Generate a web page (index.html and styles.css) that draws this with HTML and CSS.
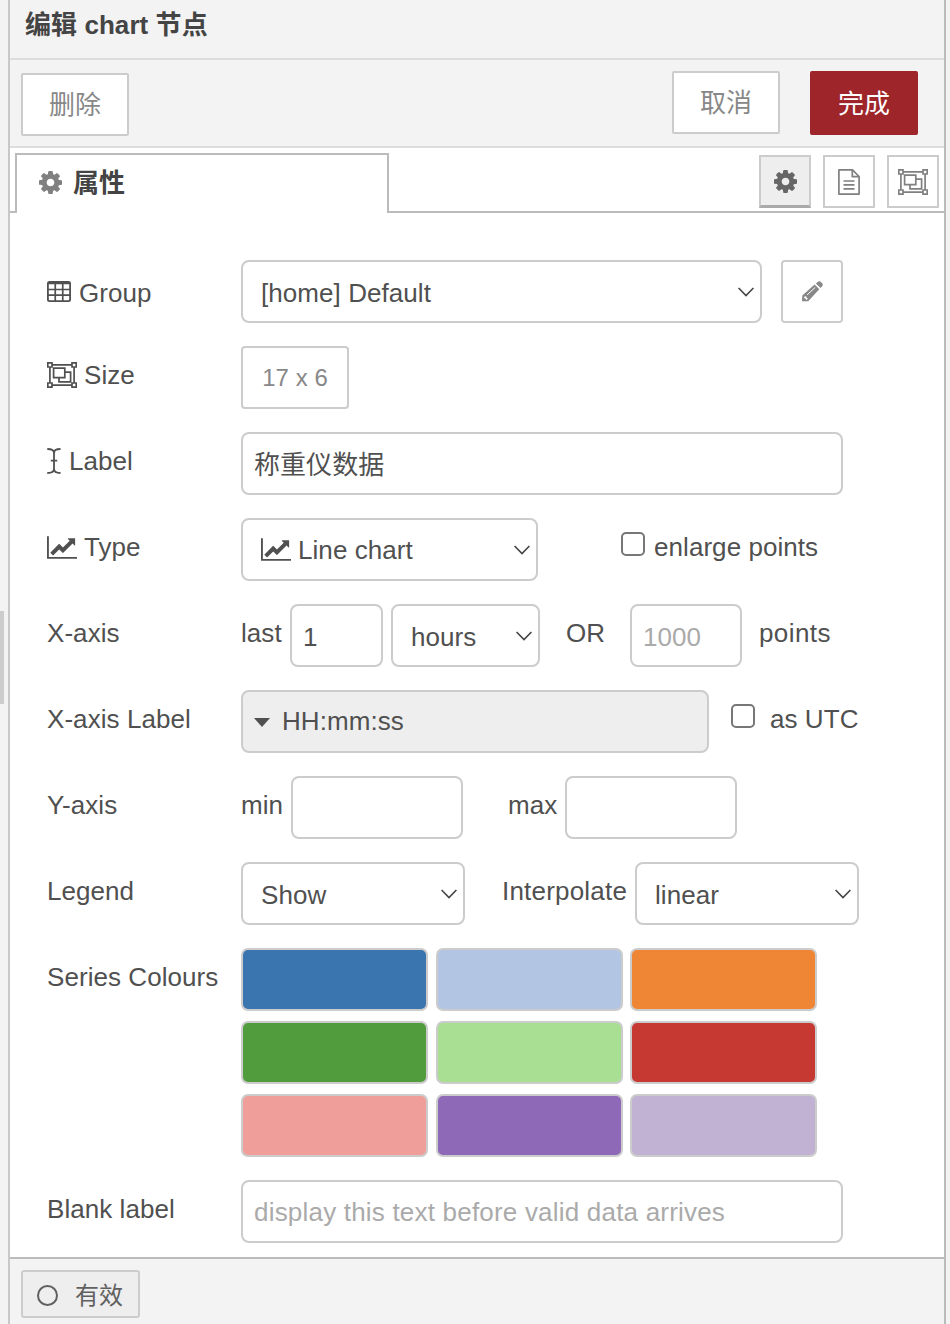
FILE: index.html
```
<!DOCTYPE html>
<html lang="zh-CN">
<head>
<meta charset="utf-8">
<title>编辑 chart 节点</title>
<link rel="stylesheet" href="styles.css">
</head>
<body>
<svg width="0" height="0" class="sprite" aria-hidden="true">
  <symbol id="cog" viewBox="0 -1408 1536 1536"><path transform="scale(1 -1)" d="M1024 640q0 106 -75 181t-181 75t-181 -75t-75 -181t75 -181t181 -75t181 75t75 181zM1536 749v-222q0 -12 -8 -23t-20 -13l-185 -28q-19 -54 -39 -91q35 -50 107 -138q10 -12 10 -25t-9 -23q-27 -37 -99 -108t-94 -71q-12 0 -26 9l-138 108q-44 -23 -91 -38q-16 -136 -29 -186q-7 -28 -36 -28h-222q-14 0 -24.5 8.5t-11.5 21.5l-28 184q-49 16 -90 37l-141 -107q-10 -9 -25 -9q-14 0 -25 11q-126 114 -165 168q-7 10 -7 23q0 12 8 23q15 21 51 66.5t54 70.5q-27 50 -41 99l-183 27q-13 2 -21 12.5t-8 23.5v222q0 12 8 23t19 13l186 28q14 46 39 92q-40 57 -107 138q-10 12 -10 24q0 10 9 23q26 36 98.5 107.5t94.5 71.5q13 0 26 -10l138 -107q44 23 91 38q16 136 29 186q7 28 36 28h222q14 0 24.5 -8.5t11.5 -21.5l28 -184q49 -16 90 -37l142 107q9 9 24 9q13 0 25 -10q129 -119 165 -170q7 -8 7 -22q0 -12 -8 -23q-15 -21 -51 -66.5t-54 -70.5q26 -50 41 -98l183 -28q13 -2 21 -12.5t8 -23.5z"/></symbol>
  <symbol id="pencil" viewBox="0 0 21 21"><path d="M.3 14.500 12.600 3.600l4.700 4.700L6.200 20.300H0zM13.900 2.500 15.900.7q1.600-1.200 3 .2l1.100 1.100q1.400 1.500.3 3L18.600 7z"/><path fill="none" stroke="#fff" stroke-width="1" d="M5.200 13.800l8-7.400"/><path fill="#fff" d="M3 15.200l1.300.4.400 1.400 1.300.5-1.400 1.400-2.800-2.600z"/></symbol>
  <symbol id="line" viewBox="0 -1408 2048 1536"><path transform="scale(1 -1)" d="M2048 0v-128h-2048v1536h128v-1408h1920zM1920 1248v-435q0 -21 -19.5 -29.5t-35.5 7.5l-121 121l-633 -633q-10 -10 -23 -10t-23 10l-233 233l-416 -416l-192 192l585 585q10 10 23 10t23 -10l233 -233l464 464l-121 121q-16 16 -7.5 35.5t29.5 19.5h435q14 0 23 -9t9 -23z"/></symbol>
  <symbol id="group" viewBox="0 0 30 26"><g fill="none" stroke="currentColor" stroke-width="1.700"><path d="M5 2.900h20M5 23.100h20M2.900 5v16M27.100 5v16"/><path d="M.8.8h4.200v4.200H.8zM25 .8h4.200v4.200H25zM.8 21h4.200v4.200H.8zM25 21h4.200v4.200H25z"/><path d="M6.600 6.200h11.200v9.400H6.600zM18 10.200h5.600v9.600H12v-4"/></g></symbol>
  <symbol id="table" viewBox="0 0 24 21"><path d="M2.500 0h19A2.500 2.500 0 0 1 24 2.500v16a2.500 2.500 0 0 1-2.500 2.500h-19A2.500 2.500 0 0 1 0 18.500v-16A2.500 2.500 0 0 1 2.500 0zM1.800 3.200v4.500h5.600V3.200zM9.100 3.200v4.500h5.800V3.200zM16.600 3.200v4.500h5.600V3.200zM1.800 9.300v4h5.600v-4zM9.100 9.300v4h5.800v-4zM16.600 9.300v4h5.600v-4zM1.800 14.900v3.400q0 .9.900.9h4.700v-4.300zM9.100 14.900v4.300h5.800v-4.300zM16.600 14.900v4.300h4.700q.9 0 .9-.9v-3.400z" fill-rule="evenodd"/></symbol>
  <symbol id="cursor" viewBox="0 0 14 26"><path fill="none" stroke="currentColor" stroke-width="1.800" d="M.3 1q6.700 0 6.700 4v16q0 4-6.700 4M13.500 1Q7 1 7 5v16q0 4 6.500 4M3.800 12.600h6.400"/></symbol>
  <symbol id="file" viewBox="0 0 22 26"><path fill="none" stroke="currentColor" stroke-width="1.700" stroke-linejoin="round" d="M.9.9h13.600l6.600 6.600v17.600H.9zM14.300.9v6.800h6.800M5.500 12h11M5.500 15.900h11M5.500 19.800h11"/></symbol>
  <symbol id="chevron" viewBox="0 0 16 10"><path fill="none" stroke="#444" stroke-width="1.600" d="M.6 1 8 8.600 15.400 1"/></symbol>
</svg>

<div class="editor">
  <div class="gutter"><div class="handle"></div></div>
  <main class="tray">
    <header class="title">编辑 chart 节点</header>
    <div class="toolbar">
      <button class="btn delete">删除</button>
      <button class="btn cancel">取消</button>
      <button class="btn primary">完成</button>
    </div>
    <nav class="tabs">
      <div class="tab-lead"></div>
      <div class="tab"><svg class="i-cog"><use href="#cog"/></svg>属性</div>
      <div class="tab-tools">
        <button class="tool active"><svg class="i-cog"><use href="#cog"/></svg></button>
        <button class="tool"><svg class="i-file"><use href="#file"/></svg></button>
        <button class="tool"><svg class="i-group"><use href="#group"/></svg></button>
      </div>
    </nav>

    <form class="form">
      <div class="row first">
        <label class="name"><svg class="i-table"><use href="#table"/></svg>Group</label>
        <div class="select w-group">[home] Default<svg class="chev"><use href="#chevron"/></svg></div>
        <button type="button" class="edit"><svg class="i-pencil"><use href="#pencil"/></svg></button>
      </div>
      <div class="row">
        <label class="name wide-icon"><svg class="i-group"><use href="#group"/></svg>Size</label>
        <button type="button" class="size">17 x 6</button>
      </div>
      <div class="row">
        <label class="name"><svg class="i-cursor"><use href="#cursor"/></svg>Label</label>
        <input class="input w-full cjk" value="称重仪数据">
      </div>
      <div class="row">
        <label class="name wide-icon"><svg class="i-line"><use href="#line"/></svg>Type</label>
        <div class="select w-type"><svg class="i-line"><use href="#line"/></svg>Line chart<svg class="chev"><use href="#chevron"/></svg></div>
        <input type="checkbox" class="check enlarge"><span class="text">enlarge points</span>
      </div>
      <div class="row">
        <label class="name">X-axis</label>
        <span class="text t-last">last</span>
        <input class="input w-last" value="1">
        <div class="select w-unit">hours<svg class="chev"><use href="#chevron"/></svg></div>
        <span class="text t-or">OR</span>
        <input class="input w-points" placeholder="1000">
        <span class="text t-points">points</span>
      </div>
      <div class="row">
        <label class="name">X-axis Label</label>
        <div class="typed"><span class="caret"></span>HH:mm:ss</div>
        <input type="checkbox" class="check utc"><span class="text t-utc">as UTC</span>
      </div>
      <div class="row">
        <label class="name">Y-axis</label>
        <span class="text t-min">min</span>
        <input class="input w-range">
        <span class="text t-max">max</span>
        <input class="input w-range">
      </div>
      <div class="row">
        <label class="name">Legend</label>
        <div class="select w-legend">Show<svg class="chev"><use href="#chevron"/></svg></div>
        <span class="text t-interp">Interpolate</span>
        <div class="select w-legend">linear<svg class="chev"><use href="#chevron"/></svg></div>
      </div>
      <div class="row">
        <label class="name">Series Colours</label>
        <div class="swatches">
          <div class="swatch blue"></div><div class="swatch light-blue"></div><div class="swatch orange"></div>
          <div class="swatch green"></div><div class="swatch light-green"></div><div class="swatch red"></div>
          <div class="swatch pink"></div><div class="swatch purple"></div><div class="swatch lilac"></div>
        </div>
      </div>
      <div class="row">
        <label class="name">Blank label</label>
        <input class="input w-full blank" placeholder="display this text before valid data arrives">
      </div>
    </form>

    <footer class="footer">
      <button class="state"><span class="ring"></span><span>有效</span></button>
    </footer>
  </main>
  <div class="edge"></div>
</div>
</body>
</html>
```
FILE: styles.css
```
* { box-sizing: border-box; }
body {
  margin: 0;
  background: #f3f3f3;
  color: #505050;
  font: 26px/30px "Liberation Sans", "Noto Sans CJK SC", sans-serif;
  letter-spacing: 0.06px;
}
button, input { font: inherit; letter-spacing: inherit; color: inherit; margin: 0; padding: 0; }
svg { fill: currentColor; flex: none; display: block; }
.sprite { position: absolute; }

.editor { display: flex; height: 1324px; overflow: hidden; }
.gutter { width: 8px; padding-top: 611px; background: #f3f3f3; }
.handle { width: 4px; height: 93px; background: #ccc; }
.edge { width: 4px; background: #f3f3f3; }
.tray {
  width: 938px;
  display: flex;
  flex-direction: column;
  background: #fff;
  border-left: 2px solid #c8c8c8;
  border-right: 2px solid #bbb;
}

.title {
  height: 60px;
  padding: 10px 15px 0;
  background: #f3f3f3;
  border-bottom: 2px solid #ddd;
  color: #444;
  font-weight: bold;
}
.toolbar {
  height: 88px;
  display: flex;
  align-items: flex-start;
  padding: 11px 26px 0 11px;
  background: #f3f3f3;
  border-bottom: 2px solid #ddd;
}
.btn {
  width: 108px;
  height: 63px;
  padding-top: 1px;
  background: #fff;
  border: 2px solid #ccc;
  border-radius: 2px;
  color: #888;
}
.delete { margin-top: 2px; }
.cancel { margin-left: auto; }
.primary { margin-left: 30px; height: 64px; background: #9e2529; border-color: #9e2529; color: #fff; }

.tabs { height: 65px; padding-top: 5px; display: flex; }
.tab-lead { width: 5px; border-bottom: 2px solid #bbb; }
.tab {
  width: 374px;
  display: flex;
  align-items: center;
  gap: 11px;
  padding: 0 0 2px 22px;
  border: 2px solid #bbb;
  border-bottom: 0;
  color: #444;
  font-weight: bold;
}
.tab .i-cog { color: #808080; margin-bottom: 2px; }
.tab-tools {
  flex: 1;
  display: flex;
  justify-content: flex-end;
  gap: 12px;
  padding: 2px 5px 0 0;
  border-bottom: 2px solid #bbb;
}
.tool {
  width: 52px;
  height: 53px;
  display: flex;
  align-items: center;
  justify-content: center;
  background: #fff;
  border: 2px solid #ccc;
  color: #808080;
}
.tool.active { background: #eee; border-bottom: 3px solid #aaa; color: #666; }

.i-cog { width: 23px; height: 23px; }
.i-pencil { width: 21px; height: 21px; }
.i-line { width: 30px; height: 23px; }
.i-group { width: 30px; height: 26px; }
.i-table { width: 24px; height: 21px; margin-bottom: 3px; }
.i-cursor { width: 14px; height: 26px; }
.i-file { width: 22px; height: 26px; }

.form { height: 1044px; padding: 47px 0 0 37px; display: flex; flex-direction: column; gap: 23px; }
.row { display: flex; align-items: flex-start; }
.name { width: 194px; height: 30px; margin-top: 14px; display: flex; align-items: center; gap: 8px; white-space: nowrap; }
.wide-icon { gap: 7px; }
.first .name { margin-top: 18px; }
.text { margin-top: 14px; white-space: nowrap; }
.select, .input, .typed {
  height: 63px;
  flex: none;
  background: #fff;
  border: 2px solid #ccc;
  border-radius: 8px;
}
.select { display: flex; align-items: center; gap: 7px; padding: 3px 6px 0 18px; }
.first .select { padding-top: 2px; }
.w-type.select { padding: 1px 6px 0 18px; }
.select .i-line { margin-bottom: 2px; }
.w-type .chev { margin-bottom: 0; }
.chev { width: 16px; height: 10px; margin: 0 0 2px auto; }
.input { padding: 3px 11px 0; outline: 0; }
.input.cjk { padding-top: 0; padding-bottom: 2px; }
.input.blank { padding-top: 1px; letter-spacing: 0.2px; }
.input::placeholder { color: #aaa; opacity: 1; }
.typed { width: 468px; display: flex; align-items: center; gap: 12px; padding: 0 0 2px 11px; background: #eee; }
.caret { border: 8px solid transparent; border-top: 9px solid #505050; border-bottom: 0; margin-top: 4px; }
.check { appearance: none; width: 24px; height: 24px; margin-top: 14px; background: #fff; border: 2px solid #777; border-radius: 5px; }
.enlarge { margin: 14px 9px 0 83px; }
.utc { margin: 14px 15px 0 22px; }

.edit, .size { height: 63px; background: #fff; border: 2px solid #ccc; border-radius: 4px; color: #888; }
.edit { width: 62px; margin-left: 19px; display: flex; align-items: center; justify-content: center; }
.size { width: 108px; font-size: 24px; }

.w-group { width: 521px; }
.w-full { width: 602px; }
.w-type { width: 297px; }
.w-last { width: 93px; }
.w-unit { width: 149px; margin-left: 8px; }
.w-points { width: 112px; }
.w-range { width: 172px; }
.w-legend { width: 224px; }
.t-last { width: 49px; }
.t-or { width: 64px; margin-left: 26px; }
.t-points { margin-left: 17px; letter-spacing: 0.4px; }
.t-min { width: 50px; }
.t-max { width: 57px; margin-left: 45px; }
.t-interp { width: 133px; margin-left: 37px; letter-spacing: 0.2px; }

.swatches { display: grid; grid-template-columns: repeat(3, 187px); grid-auto-rows: 63px; gap: 10px 7.5px; }
.swatch { border: 2px solid #ccc; border-radius: 7px; }
.blue { background: #3a75af; }
.light-blue { background: #b2c5e2; }
.orange { background: #ee8636; }
.green { background: #519d3e; }
.light-green { background: #a8df93; }
.red { background: #c53932; }
.pink { background: #f09e9a; }
.purple { background: #8d69b7; }
.lilac { background: #c1b1d3; }

.footer { height: 67px; padding: 11px; background: #f3f3f3; border-top: 2px solid #bbb; }
.state {
  width: 119px;
  height: 48px;
  display: flex;
  align-items: center;
  gap: 17px;
  padding: 3px 0 0 14px;
  background: #eee;
  border: 2px solid #ccc;
  border-radius: 3px;
  color: #606060;
  font-size: 24px;
}
.ring { width: 21px; height: 21px; border: 2px solid #606060; border-radius: 50%; }
```
